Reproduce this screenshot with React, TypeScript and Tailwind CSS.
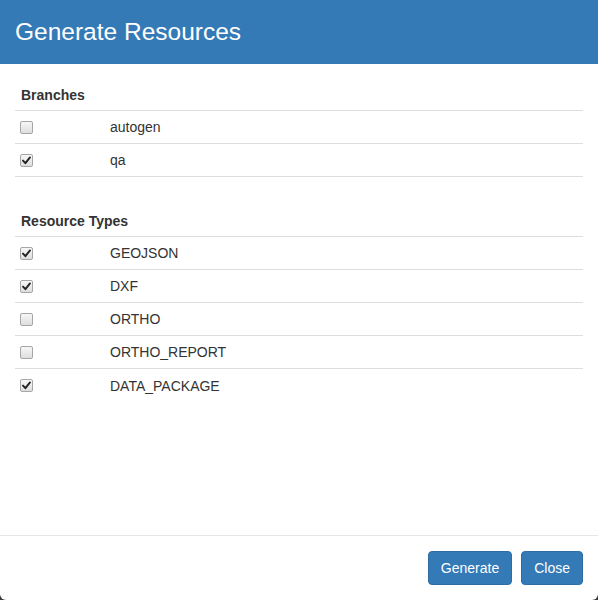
import { useState } from "react";

interface Option {
    name: string;
    checked: boolean;
}

function CheckBox({ checked, onToggle }: { checked: boolean; onToggle: () => void }) {
    return (
        <button
            type="button"
            onClick={onToggle}
            className="w-[13px] h-[13px] rounded-[2px] border border-[#a6a6a6] bg-gradient-to-b from-[#f7f7f7] to-[#dedede] flex items-center justify-center p-0"
        >
            {checked && (
                <svg width="11" height="11" viewBox="0 0 11 11">
                    <path d="M2 5.6 L4.4 8.2 L9 2.4" fill="none" stroke="#222" strokeWidth="1.9" strokeLinecap="round" strokeLinejoin="round" />
                </svg>
            )}
        </button>
    );
}

function Section({
    title,
    items,
    setItems,
    lastBorder,
}: {
    title: string;
    items: Option[];
    setItems: (items: Option[]) => void;
    lastBorder: boolean;
}) {
    const toggle = (idx: number) => {
        setItems(items.map((item, i) => (i === idx ? { ...item, checked: !item.checked } : item)));
    };

    return (
        <div>
            <div className="h-[31px] border-b border-[#dddddd] pl-[6px] pt-[5px] text-[14px] leading-[20px] font-bold text-[#333]">
                {title}
            </div>
            {items.map((item, i) => (
                <div
                    key={item.name}
                    className={`h-[33px] flex items-center ${i < items.length - 1 || lastBorder ? "border-b border-[#dddddd]" : ""}`}
                >
                    <div className="w-[95px] pl-[5px] flex items-center">
                        <CheckBox checked={item.checked} onToggle={() => toggle(i)} />
                    </div>
                    <span className="text-[14px] leading-[20px] text-[#333]">{item.name}</span>
                </div>
            ))}
        </div>
    );
}

export default function App() {
    const [branches, setBranches] = useState<Option[]>([
        { name: "autogen", checked: false },
        { name: "qa", checked: true },
    ]);
    const [types, setTypes] = useState<Option[]>([
        { name: "GEOJSON", checked: true },
        { name: "DXF", checked: true },
        { name: "ORTHO", checked: false },
        { name: "ORTHO_REPORT", checked: false },
        { name: "DATA_PACKAGE", checked: true },
    ]);

    return (
        <div className="w-[598px] h-[600px] bg-[#3a3a3a]" style={{ fontFamily: '"Liberation Sans", Arial, sans-serif' }}>
            <div className="h-full bg-white rounded-b-[6px] flex flex-col overflow-hidden">
                {/* header */}
                <div className="h-[64px] bg-[#337ab7] flex items-center pl-[15px]">
                    <h4 className="text-white text-[24.5px]">Generate Resources</h4>
                </div>

                {/* body */}
                <div className="flex-1 px-[15px] pt-[16px]">
                    <Section title="Branches" items={branches} setItems={setBranches} lastBorder={true} />
                    <div className="mt-[29px]">
                        <Section title="Resource Types" items={types} setItems={setTypes} lastBorder={false} />
                    </div>
                </div>

                {/* footer */}
                <div className="border-t border-[#e5e5e5] px-[15px] pt-[15px] pb-[15px] flex justify-end gap-[9px]">
                    <button className="bg-[#337ab7] border border-[#2e6da4] rounded-[4px] px-[12px] py-[6px] text-[14px] leading-[20px] text-white">
                        Generate
                    </button>
                    <button className="bg-[#337ab7] border border-[#2e6da4] rounded-[4px] px-[12px] py-[6px] text-[14px] leading-[20px] text-white">
                        Close
                    </button>
                </div>
            </div>
        </div>
    );
}
